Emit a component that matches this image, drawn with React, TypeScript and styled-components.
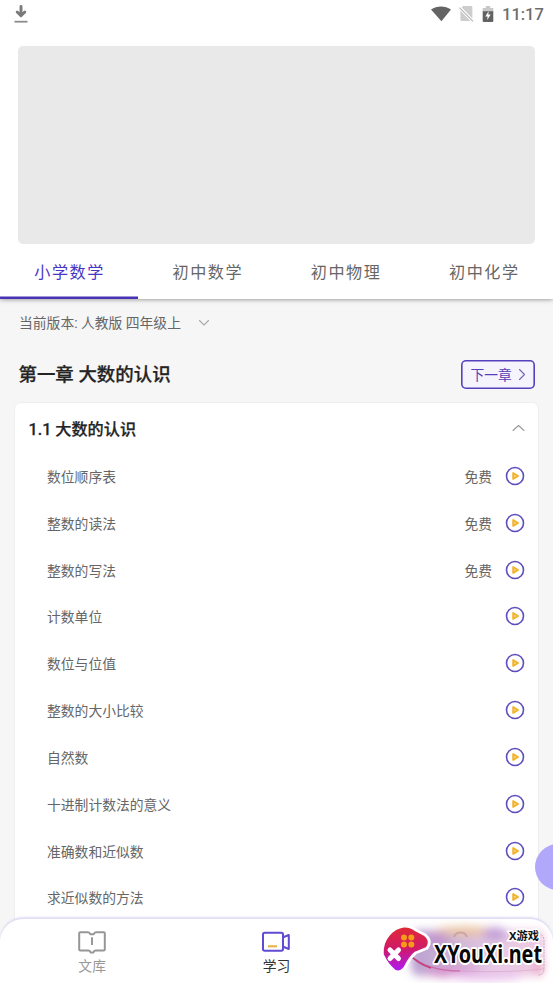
import React from "react";
import styled, { createGlobalStyle } from "styled-components";

const Global = createGlobalStyle`
  * { box-sizing: border-box; }
  html, body { margin: 0; background: #f6f6f6; overflow: hidden; }
  body { font-family: Roboto, "Noto Sans CJK SC", sans-serif; color: #666; }
  svg { display: block; flex: none; }
`;

const Screen = styled.div`
  position: relative;
  width: 553px;
  height: 983px;
  display: flex;
  flex-direction: column;
  overflow: hidden;
  background: #f6f6f6;
`;

const Top = styled.header`
  flex: none;
  height: 299px;
  display: flex;
  flex-direction: column;
  background: #fff;
  box-shadow: 0 0 5px rgba(0, 0, 0, 0.5);
  z-index: 1;
`;

const StatusBar = styled.div`
  flex: none;
  height: 46px;
  display: flex;
  justify-content: space-between;
  padding: 4px 8px 0 11px;
`;

const StatusIcons = styled.div`
  display: flex;
  height: 20px;
  align-items: center;
`;

const SpacedIcons = styled(StatusIcons)`
  gap: 8px;
  padding-bottom: 1px;
`;

const Clock = styled.span`
  margin-left: 8px;
  padding-top: 1px;
  width: 43px;
  font-size: 16.5px;
  line-height: 20px;
  font-weight: 500;
  color: #6e6e6e;
  white-space: nowrap;
`;

const Banner = styled.div`
  flex: none;
  height: 198px;
  margin: 0 18px;
  border-radius: 5px;
  background: #e9e9e9;
`;

const Tabs = styled.nav`
  flex: none;
  height: 55px;
  display: grid;
  grid-template-columns: repeat(4, 1fr);
`;

const Tab = styled.div<{ $active?: boolean }>`
  display: flex;
  justify-content: center;
  padding-left: 1px;
  font-size: 16.1px;
  letter-spacing: 1.6px;
  line-height: 58px;
  height: 55px;
  color: ${(p) => (p.$active ? "#4a34c4" : "#666")};
  box-shadow: ${(p) => (p.$active ? "inset 0 -2.5px #4733b5" : "none")};
`;

const Version = styled.div`
  flex: none;
  height: 47px;
  display: flex;
  align-items: center;
  gap: 17px;
  padding: 1px 0 0 19px;
  font-size: 13.8px;
  line-height: 20px;
  color: #666;
`;

const ChapterBar = styled.div`
  flex: none;
  height: 56px;
  display: flex;
  align-items: center;
  justify-content: space-between;
  padding: 0 18px 0 18.5px;
`;

const Chapter = styled.h1`
  margin: 0;
  padding-top: 2px;
  font-size: 18.45px;
  font-weight: 500;
  line-height: 28px;
  color: #242424;
  -webkit-text-stroke: 0.25px #242424;
`;

const NextButton = styled.button`
  width: 74px;
  height: 29px;
  display: flex;
  align-items: center;
  gap: 6px;
  margin: 0;
  padding: 0 0 0 9.5px;
  border: none;
  border-radius: 5px;
  box-shadow: inset 0 0 0 1.6px #5641bd;
  background: #f5f3fb;
  color: #5540b8;
  font: 400 13.8px Roboto, "Noto Sans CJK SC", sans-serif;
  white-space: nowrap;
`;

const Card = styled.section`
  flex: 1;
  min-height: 0;
  margin: 0 14px;
  border: 1px solid #eeeeee;
  border-radius: 7px 7px 0 0;
  background: #fff;
`;

const SectionHead = styled.div`
  height: 50.4px;
  display: flex;
  align-items: center;
  justify-content: space-between;
  padding: 0 13px 0 13.5px;
`;

const SectionTitle = styled.h2`
  margin: 0;
  font-size: 16.15px;
  font-weight: 500;
  color: #242424;
  -webkit-text-stroke: 0.25px #242424;
`;

const LessonRow = styled.div`
  height: 46.85px;
  display: flex;
  align-items: center;
  padding: 0 13px 2px 32px;
  font-size: 13.8px;
`;

const LessonName = styled.span`
  flex: 1;
`;

const Free = styled.span`
  margin-right: 13px;
`;

const BottomNav = styled.footer`
  position: absolute;
  left: 0;
  bottom: 0;
  width: 553px;
  height: 64.5px;
  display: grid;
  grid-template-columns: repeat(3, 184.3px);
  border-radius: 23px 23px 0 0;
  background: #fff;
  box-shadow: 0 -1.5px 2px #dfdcf4;
`;

const NavItem = styled.div<{ $active?: boolean }>`
  display: flex;
  flex-direction: column;
  align-items: center;
  gap: 1px;
  padding-top: 12px;
  font-size: 13.8px;
  line-height: 20px;
  color: ${(p) => (p.$active ? "#333" : "#999")};
`;

const FloatingBall = styled.div`
  position: absolute;
  left: 535px;
  top: 844px;
  width: 46px;
  height: 46px;
  border-radius: 50%;
  background: #b1a8fb;
`;

const Watermark = styled.div`
  position: absolute;
  left: 380px;
  top: 920px;
  width: 173px;
  height: 63px;
`;

const PlayIcon = () => (
  <svg width="20" height="20" viewBox="0 0 20 20">
    <circle cx="10" cy="10" r="8.5" fill="#fff" stroke="#5f4dbd" strokeWidth="1.6" />
    <path d="M8.2 7.1v5.8l4.8-2.9z" fill="#f7dc98" stroke="#f2b32f" strokeWidth="1.9" strokeLinejoin="round" />
  </svg>
);

const DownloadIcon = () => (
  <svg width="20" height="20" viewBox="0 0 20 20">
    <path d="M10 2.5v8M6.2 8l3.8 3.8L13.8 8" fill="none" stroke="#7a7a7a" strokeWidth="2.9" strokeLinecap="round" strokeLinejoin="round" />
    <path d="M3.5 17.7h13" stroke="#8c8c8c" strokeWidth="1.8" />
  </svg>
);

const WifiIcon = () => (
  <svg width="20" height="16" viewBox="0 0 20 16">
    <path d="M0 3.4C5.8-.5 14.2-.5 20 3.4L10.4 15.2z" fill="#646464" />
  </svg>
);

const SimIcon = () => (
  <svg width="15" height="17" viewBox="0 0 15 17">
    <path d="M4 1H12q1.4 0 1.4 1.4v11.4L2.8 2.4z" fill="#cdcdcd" />
    <path d="M1.4 5.4 11.4 16H2.9q-1.5 0-1.5-1.5z" fill="#cdcdcd" />
    <path d="m.4 2.4 13.8 14" stroke="#fff" strokeWidth="2.6" />
    <path d="m.4 2.6 13.6 13.8" stroke="#b8b8b8" strokeWidth="1.2" />
  </svg>
);

const BatteryIcon = () => (
  <svg width="12" height="18" viewBox="0 0 12 18">
    <path d="M.7 3h3.1V1h4.4v2h3.1v4H.7z" fill="#c8c8c8" />
    <path d="M.7 6.2h10.6V16q0 1-1 1H1.7q-1 0-1-1z" fill="#626262" />
    <path d="M6.7 6 3.3 11.5h2.3l-.4 3.5L8.7 9.5H6.3z" fill="#fff" />
  </svg>
);

type ChevronProps = { d: string; w: number; h: number; color: string };

const Chevron = ({ d, w, h, color }: ChevronProps) => (
  <svg width={w} height={h} viewBox={`0 0 ${w} ${h}`}>
    <path d={d} fill="none" stroke={color} strokeWidth="1.1" strokeLinecap="round" strokeLinejoin="round" />
  </svg>
);

const BookIcon = () => (
  <svg width="30" height="24" viewBox="0 0 30 24">
    <path d="M3.2 1.3H11q1.6 0 2.3 1.9h3.4q.7-1.9 2.3-1.9h7.8q1 0 1 1v16.2q0 1-1 1h-8.3q-1.6 0-2 1.9h-3q-.4-1.9-2-1.9H3.2q-1 0-1-1V2.3q0-1 1-1z" fill="none" stroke="#969696" strokeWidth="2" strokeLinejoin="round" />
    <path d="M15 6.3v7.7" stroke="#999" strokeWidth="2" />
  </svg>
);

const CameraIcon = () => (
  <svg width="30" height="24" viewBox="0 0 30 24">
    <rect x="2" y="1.8" width="20" height="18" rx="1.7" fill="none" stroke="#604bd1" strokeWidth="2" />
    <path d="M22.2 6.2 27.8 4v14l-5.6-2.2" fill="none" stroke="#604bd1" strokeWidth="2" strokeLinejoin="round" />
    <path d="M7 15.3h9" stroke="#e9b54a" strokeWidth="2.2" />
  </svg>
);

const padShape =
  "M4.5 34C3.5 20 14 9.5 24 8.3Q30 8 35 12L43.5 16.3Q49.5 21 45.5 26.6Q40 29 34.5 31Q28.5 36 24.5 44Q21 51.5 15.5 49Q8.5 43 4.5 34z";

const WatermarkArt = () => (
  <svg width="173" height="63" viewBox="0 0 173 63" overflow="visible">
    <defs>
      <linearGradient id="pad" x1="0" y1="0" x2="0" y2="1">
        <stop offset="0" stopColor="#df2836" />
        <stop offset=".5" stopColor="#cf1a6b" />
        <stop offset="1" stopColor="#b019ed" />
      </linearGradient>
      <linearGradient id="glow" x1="0" y1="0" x2="1" y2="0">
        <stop offset="0" stopColor="#b69bce" />
        <stop offset=".35" stopColor="#cdb2d5" />
        <stop offset=".65" stopColor="#e5c9e2" />
        <stop offset="1" stopColor="#eec2df" />
      </linearGradient>
      <filter id="soft" x="-20%" y="-30%" width="140%" height="170%"><feGaussianBlur stdDeviation="4" /></filter>
    </defs>
    <g filter="url(#soft)">
      <rect x="31" y="10" width="133" height="46" rx="8" fill="url(#glow)" opacity=".95" />
      <ellipse cx="85" cy="11" rx="30" ry="5" fill="#e9c4a4" />
      <ellipse cx="115" cy="14" rx="12" ry="7" fill="#c5a0d8" />
      <ellipse cx="58" cy="20" rx="12" ry="8" fill="#c398cf" />
      <ellipse cx="74" cy="52" rx="28" ry="6" fill="#d391c9" />
      <ellipse cx="105" cy="56" rx="38" ry="5" fill="#eac5ed" />
      <ellipse cx="159" cy="48" rx="5" ry="8" fill="#e9a8c4" />
    </g>
    <path d="M74 17a7 7 0 0 1 13 0" fill="none" stroke="#b88c91" strokeWidth="2" opacity=".55" />
    <path d="M156 12q8 2 8 9v28q0 6-6 6" fill="none" stroke="#b295b4" strokeWidth=".7" strokeDasharray="2 1" />
    <path d="M29 34q17 17 51 17" fill="none" stroke="#c9529a" strokeWidth="1.3" opacity=".65" />
    <path d="M80 51q45 2 84-2" fill="none" stroke="#d58fc0" strokeWidth="1" opacity=".4" />
    <path d="M29 34q9 10 22 14" fill="none" stroke="#c63e76" strokeWidth="1.8" />
    <path d={padShape} fill="#fff" stroke="#fff" strokeWidth="7" strokeLinejoin="round" />
    <path d={padShape} fill="url(#pad)" stroke="url(#pad)" strokeWidth="1.5" strokeLinejoin="round" />
    <path d="m11.5 31 5.5 0" stroke="none" />
    <path d="m10 30 8.5 8.5m0-8.5L10 38.5" stroke="#fff" strokeWidth="5" strokeLinecap="round" />
    <g fill="#f59c16">
      <circle cx="24" cy="17.5" r="3" />
      <circle cx="31.3" cy="17.5" r="3" />
      <circle cx="24" cy="24.5" r="3" />
      <circle cx="31.3" cy="24.5" r="3" />
    </g>
    <text x="129" y="19.5" fontFamily="'Noto Sans', 'Noto Sans CJK SC', sans-serif" fontSize="11" fontWeight="700" fill="#111" stroke="#fff" strokeWidth="3" paintOrder="stroke" textLength="30" lengthAdjust="spacingAndGlyphs">X游戏</text>
    <text x="54" y="43" fontFamily="'Noto Sans', sans-serif" fontSize="25" fontWeight="700" fill="#070707" stroke="#fff" strokeWidth="4" strokeLinejoin="round" paintOrder="stroke" textLength="108" lengthAdjust="spacingAndGlyphs">XYouXi.net</text>
  </svg>
);

const tabs = ["小学数学", "初中数学", "初中物理", "初中化学"];
const lessons = [
  "数位顺序表", "整数的读法", "整数的写法", "计数单位", "数位与位值",
  "整数的大小比较", "自然数", "十进制计数法的意义", "准确数和近似数", "求近似数的方法",
];

export default function App() {
  return (
    <Screen>
      <Global />
      <Top>
        <StatusBar>
          <DownloadIcon />
          <StatusIcons>
            <SpacedIcons><WifiIcon /><SimIcon /><BatteryIcon /></SpacedIcons>
            <Clock>11:17</Clock>
          </StatusIcons>
        </StatusBar>
        <Banner />
        <Tabs>{tabs.map((t, i) => <Tab key={t} $active={i === 0}>{t}</Tab>)}</Tabs>
      </Top>
      <Version>
        <span>当前版本: 人教版 四年级上</span>
        <Chevron d="M1.5 1.5 6 6l4.5-4.5" w={12} h={8} color="#aaa" />
      </Version>
      <ChapterBar>
        <Chapter>第一章 大数的认识</Chapter>
        <NextButton>下一章<Chevron d="m1.5 1.5 5 5-5 5" w={8} h={13} color="#7464b8" /></NextButton>
      </ChapterBar>
      <Card>
        <SectionHead>
          <SectionTitle>1.1 大数的认识</SectionTitle>
          <Chevron d="m1 6.5 5.5-5 5.5 5" w={13} h={8} color="#999" />
        </SectionHead>
        {lessons.map((name, i) => (
          <LessonRow key={name}>
            <LessonName>{name}</LessonName>
            {i < 3 && <Free>免费</Free>}
            <PlayIcon />
          </LessonRow>
        ))}
      </Card>
      <FloatingBall />
      <BottomNav>
        <NavItem><BookIcon />文库</NavItem>
        <NavItem $active><CameraIcon />学习</NavItem>
      </BottomNav>
      <Watermark><WatermarkArt /></Watermark>
    </Screen>
  );
}
